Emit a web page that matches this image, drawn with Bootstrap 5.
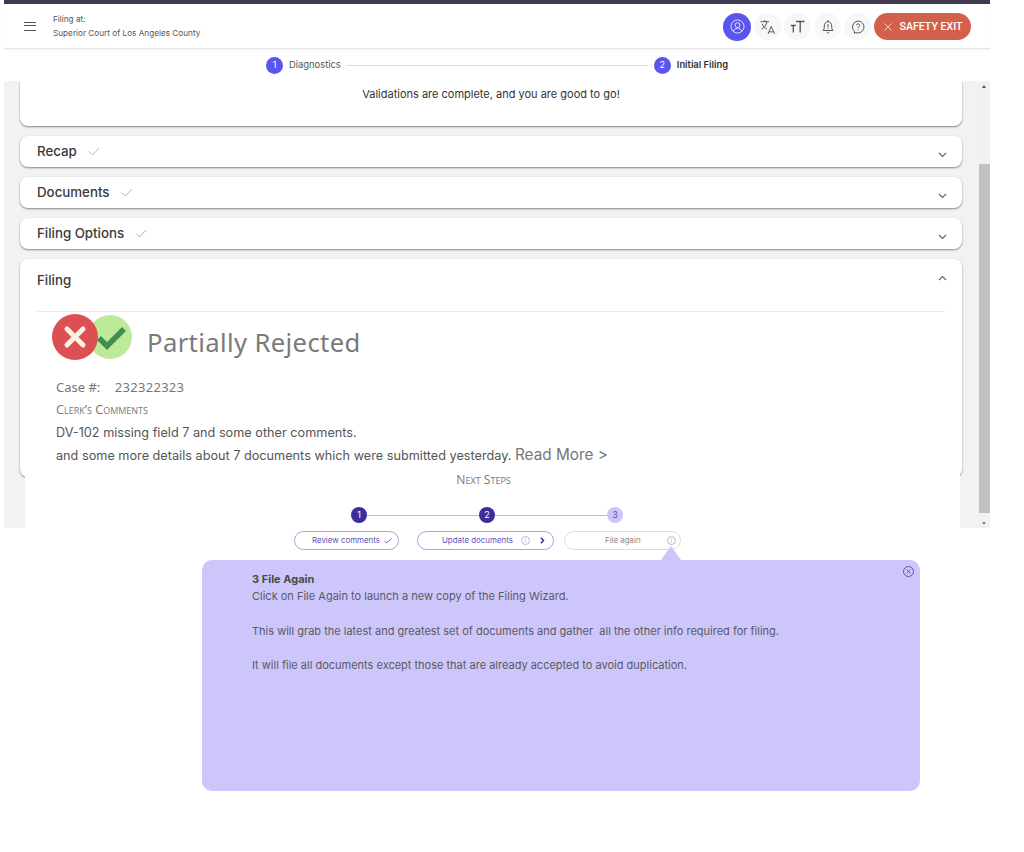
<!DOCTYPE html>
<html lang="en">
<head>
<meta charset="utf-8">
<title>Filing</title>
<link href="https://cdn.jsdelivr.net/npm/bootstrap@5.3.0/dist/css/bootstrap.min.css" rel="stylesheet">
<style>
html,body{height:852px;overflow:hidden;background:#fff;}
body{font-family:Inter,"Liberation Sans",sans-serif;color:#444;position:relative;}
.app-frame{width:990px;padding-left:4px;}
.top-strip{height:4px;background:#3f3a4f;margin-bottom:1px;}
.app-header{height:44px;border-bottom:1px solid #e6e6e6;box-shadow:0 1px 2px rgba(0,0,0,.05);padding:0 19px 0 20px;}
.burger{width:12px;height:9px;border-top:1.5px solid #555;border-bottom:1.5px solid #555;position:relative;margin-right:17px;}
.burger::after{content:"";position:absolute;left:0;right:0;top:2.25px;border-top:1.5px solid #555;}
.court{font-size:8.2px;line-height:13.5px;color:#555;}
.round-btn{width:27px;height:27px;border-radius:50%;background:#f6f7f8;border:0;padding:0;margin-left:3px;color:#555;}
.round-btn.active-user{width:28px;height:28px;background:#5a55ee;color:#e8e6ff;margin-left:0;}
.exit-btn{height:27px;width:97px;margin-left:3px;background:#d2604b;color:#fff;border:0;border-radius:14px;font:500 10.6px Roboto,sans-serif;padding:0 0 0 1px;}
.wizard{height:32px;font-size:9.4px;color:#555;}
.wiz-num{width:17px;height:17px;border-radius:50%;background:#5a55ee;color:#fff;font-size:9px;margin-right:6px;}
.wiz-line{width:301px;height:1px;background:#ddd;margin:0 6px;}
.wiz-strong{font-weight:600;color:#333;}
.work{height:447px;background:#f2f2f2;}
.pane{flex:1;padding:0 17px 0 16px;overflow:hidden;}
.scroller{width:11px;background:#f1f1f1;position:relative;}
.scroll-thumb{position:absolute;left:0;right:0;top:83px;height:349px;background:#c1c1c1;}
.arrow-up,.arrow-down{position:absolute;left:3px;width:0;height:0;border-left:2.5px solid transparent;border-right:2.5px solid transparent;}
.arrow-up{top:4px;border-bottom:3px solid #555;}
.arrow-down{bottom:3px;border-top:3px solid #888;}
.panel-card{background:#fff;border:0;border-radius:8px;box-shadow:0 1px 2px rgba(0,0,0,.45);margin-bottom:10px;}
.panel-first{height:45px;border-radius:0 0 8px 8px;font-size:11px;color:#333;text-align:center;padding-top:5px;}
.panel-row{height:31px;padding:0 15px 0 17px;font-size:13.3px;font-weight:500;color:#3a3a3a;}
.panel-row .tick{margin-left:11px;}
.panel-row .chev{margin-top:6px;}
.panel-open{height:218px;padding:0 17px;}
.open-head{height:42px;padding-top:1px;font-size:13.3px;font-weight:500;color:#3a3a3a;}
.open-chev{margin-right:-2px;margin-top:-5px;}
.open-body{border-top:1px solid #ececec;margin-top:10px;padding-left:19px;position:relative;}
.status-line{height:62px;}
.status-icon{margin-left:-4px;margin-top:-12px;}
.status-title{font-size:25.7px;color:#7a7a7a;margin-left:14px;line-height:1;font-family:"Noto Sans",sans-serif;letter-spacing:.35px;margin-top:-1px;}
.case-line{font:13px "Noto Sans",sans-serif;color:#777;line-height:18px;margin:4px 0 7px;}
.case-line span{margin-left:11px;letter-spacing:.3px;}
.clerk{font:12.7px/13px "Open Sans",sans-serif;font-variant:small-caps;color:#777;margin-bottom:6px;}
.detail{font-size:12.7px;line-height:21.5px;color:#555;}
.read-more{font-size:15.3px;color:#777;}
.next-panel{position:absolute;left:25px;top:473px;width:935px;height:79px;background:#fff;text-align:center;}
.next-title{font:12.2px/13px "Open Sans",sans-serif;font-variant:small-caps;color:#777;margin-bottom:21px;width:917px;}
.step-track{width:272px;margin-left:326px;height:16px;}
.step-dot{width:16px;height:16px;border-radius:50%;background:#3d2f9b;color:#fff;font-size:9px;flex:none;}
.step-dot.pending{background:#cbc5fa;color:#5a4fc0;}
.step-bar{flex:1;height:1px;background:#bcbcc8;}
.pill-row{margin-left:269px;margin-top:8px;}
.step-pill{height:19px;border:1px solid #a9a3dd;border-radius:10px;font-size:7.9px;color:#5d54b8;background:#fff;padding:0;position:relative;}
.step-pill.muted{border-color:#ddd;color:#888;}
.pill-one{width:105px;padding-left:17px;margin-right:18px;}
.pill-two{width:137px;padding-left:24px;margin-right:10px;}
.pill-three{width:117px;padding-left:40px;}
.info-dot{width:9px;height:9px;border-radius:50%;border:1px solid #b9b4ea;color:#a8a2e6;font-size:6px;line-height:7px;text-align:center;flex:none;}
.coach{position:absolute;left:202px;top:560px;width:718px;height:231px;background:#ccc6fa;border-radius:10px;padding:11px 50px;font-size:11px;line-height:17.2px;color:#5a5a66;}
.coach p{margin:0 0 17.2px;}
.coach strong{font-weight:700;color:#4a4a4a;}
.coach-tip{position:absolute;left:459px;top:-14px;width:0;height:0;border-left:10px solid transparent;border-right:10px solid transparent;border-bottom:14px solid #ccc6fa;}
.coach-close{position:absolute;right:6px;top:6px;width:11px;height:11px;color:#4f46a8;}
</style>
</head>
<body>
<div class="app-frame">
  <div class="top-strip"></div>
  <header class="app-header d-flex align-items-center bg-white">
    <div class="burger"></div>
    <div class="court">Filing at:<br>Superior Court of Los Angeles County</div>
    <div class="ms-auto d-flex align-items-center">
      <button class="round-btn active-user d-flex align-items-center justify-content-center" aria-label="Profile">
        <svg width="15" height="15" viewBox="0 0 16 16" fill="none" stroke="currentColor" stroke-width="1"><circle cx="8" cy="8" r="7"/><circle cx="8" cy="6.5" r="2.6"/><path d="M3.4 13c1-2.2 2.6-3 4.6-3s3.6.8 4.6 3"/></svg>
      </button>
      <button class="round-btn d-flex align-items-center justify-content-center" aria-label="Language">
        <svg width="18" height="16" viewBox="0 0 16 15" fill="none" stroke="currentColor" stroke-width=".9"><path d="M1 2.5h8M5 1v1.5M2 9.5c3-1.500 4.500-4 5-7M2.500 4.500c1 2.500 2.500 4 4.500 5M8 14l3-7 3.200 7M9 12h4.200"/></svg>
      </button>
      <button class="round-btn d-flex align-items-center justify-content-center" aria-label="Text size">
        <svg width="15" height="13" viewBox="0 0 15 13" fill="none" stroke="currentColor" stroke-width="1.3"><path d="M6 1.500h8.500M10.200 1.500V12.500M.8 5.500h5M3.300 5.500v7"/></svg>
      </button>
      <button class="round-btn d-flex align-items-center justify-content-center" aria-label="Notifications">
        <svg width="12" height="15" viewBox="0 0 12 15" fill="none" stroke="currentColor" stroke-width="1"><path d="M1 11.500c1-1 1.300-2 1.300-4.500 0-2.500 1.500-4.200 3.700-4.200S9.700 4.500 9.700 7c0 2.500.3 3.500 1.300 4.500zM6 1v1.800M4.700 13.200c.6.900 2 .9 2.600 0M6 5v3.500M6 9.500v.8"/></svg>
      </button>
      <button class="round-btn d-flex align-items-center justify-content-center" aria-label="Help">
        <svg width="14" height="14" viewBox="0 0 14 14" fill="none" stroke="currentColor" stroke-width="1"><path d="M7 1a6 6 0 1 1-2.400 11.500L3.500 13.500v-2A6 6 0 0 1 7 1z"/><path d="M5.400 5.400c0-2 3.200-2 3.200-.1 0 1.300-1.600 1.300-1.600 2.800M7 9.400v.8"/></svg>
      </button>
      <button class="exit-btn d-flex align-items-center justify-content-center">
        <svg width="8" height="8" viewBox="0 0 8 8" stroke="#f5d5cf" stroke-width=".9" class="me-2"><path d="M.5.500l7 7M7.500.500l-7 7"/></svg>SAFETY EXIT
      </button>
    </div>
  </header>
  <nav class="wizard d-flex align-items-center justify-content-center">
    <span class="wiz-num d-flex align-items-center justify-content-center">1</span>Diagnostics
    <span class="wiz-line"></span>
    <span class="wiz-num d-flex align-items-center justify-content-center">2</span><span class="wiz-strong">Initial Filing</span>
  </nav>
  <div class="work d-flex">
    <main class="pane">
      <div class="panel-card panel-first">Validations are complete, and you are good to go!</div>
      <div class="panel-card panel-row d-flex align-items-center">Recap
        <svg class="tick" width="12" height="9" viewBox="0 0 12 9" fill="none" stroke="#8fc4bd" stroke-width="1"><path d="M1 4.500l3.500 3.500 6.500-7"/></svg>
        <svg class="chev ms-auto" width="9" height="6" viewBox="0 0 9 6" fill="none" stroke="#666" stroke-width="1.200"><path d="M1 1l3.500 3.500L8 1"/></svg>
      </div>
      <div class="panel-card panel-row d-flex align-items-center">Documents
        <svg class="tick" width="12" height="9" viewBox="0 0 12 9" fill="none" stroke="#8fc4bd" stroke-width="1"><path d="M1 4.500l3.500 3.500 6.500-7"/></svg>
        <svg class="chev ms-auto" width="9" height="6" viewBox="0 0 9 6" fill="none" stroke="#666" stroke-width="1.200"><path d="M1 1l3.500 3.500L8 1"/></svg>
      </div>
      <div class="panel-card panel-row d-flex align-items-center">Filing Options
        <svg class="tick" width="12" height="9" viewBox="0 0 12 9" fill="none" stroke="#8fc4bd" stroke-width="1"><path d="M1 4.500l3.500 3.500 6.500-7"/></svg>
        <svg class="chev ms-auto" width="9" height="6" viewBox="0 0 9 6" fill="none" stroke="#666" stroke-width="1.200"><path d="M1 1l3.500 3.500L8 1"/></svg>
      </div>
      <div class="panel-card panel-open">
        <div class="open-head d-flex align-items-center justify-content-between">Filing
          <svg class="open-chev" width="9" height="6" viewBox="0 0 9 6" fill="none" stroke="#666" stroke-width="1.200"><path d="M1 5l3.500-3.500L8 5"/></svg>
        </div>
        <div class="open-body">
          <div class="status-line d-flex align-items-center">
            <svg class="status-icon" width="81" height="46" viewBox="0 0 81 46">
              <circle cx="58" cy="23" r="22" fill="#bdea98"/>
              <path d="M47 24l8 8 17-17" fill="none" stroke="#3f8f55" stroke-width="5.500"/>
              <circle cx="23" cy="23" r="23" fill="#dc4f52"/>
              <path d="M15 15l16 16M31 15L15 31" fill="none" stroke="#fdf1e6" stroke-width="5" stroke-linecap="round"/>
            </svg>
            <div class="status-title">Partially Rejected</div>
          </div>
          <div class="case-line">Case #: <span>232322323</span></div>
          <div class="clerk">Clerk’s Comments</div>
          <div class="detail">DV-102 missing field 7 and some other comments.<br>and some more details about 7 documents which were submitted yesterday. <span class="read-more">Read More &gt;</span></div>
        </div>
      </div>
    </main>
    <aside class="scroller">
      <span class="arrow-up"></span>
      <div class="scroll-thumb"></div>
      <span class="arrow-down"></span>
    </aside>
  </div>
</div>

<section class="next-panel">
  <div class="next-title">Next Steps</div>
  <div class="step-track d-flex align-items-center">
    <span class="step-dot d-flex align-items-center justify-content-center">1</span>
    <span class="step-bar"></span>
    <span class="step-dot d-flex align-items-center justify-content-center">2</span>
    <span class="step-bar"></span>
    <span class="step-dot pending d-flex align-items-center justify-content-center">3</span>
  </div>
  <div class="pill-row d-flex">
    <button class="step-pill pill-one d-flex align-items-center">Review comments
      <svg class="ms-1" width="8" height="6" viewBox="0 0 8 6" fill="none" stroke="#5d54b8" stroke-width=".9"><path d="M.5 3l2 2L7.500.500"/></svg>
    </button>
    <button class="step-pill pill-two d-flex align-items-center">Update documents
      <span class="info-dot ms-2">i</span>
      <svg class="ms-auto me-2" width="5" height="7" viewBox="0 0 5 7" fill="none" stroke="#3d2f9b" stroke-width="1.500"><path d="M1 .8l2.500 2.700L1 6.200"/></svg>
    </button>
    <button class="step-pill pill-three muted d-flex align-items-center">File again
      <span class="info-dot ms-auto me-1">i</span>
    </button>
  </div>
</section>

<aside class="coach">
  <span class="coach-tip"></span>
  <svg class="coach-close" viewBox="0 0 11 11" fill="none" stroke="currentColor" stroke-width=".9"><circle cx="5.500" cy="5.500" r="5"/><path d="M3.700 3.700l3.600 3.600M7.300 3.700L3.700 7.300"/></svg>
  <strong>3 File Again</strong><br>
  <p>Click on File Again to launch a new copy of the Filing Wizard.</p>
  <p>This will grab the latest and greatest set of documents and gather&nbsp; all the other info required for filing.</p>
  <p>It will file all documents except those that are already accepted to avoid duplication.</p>
</aside>
<script src="https://cdn.jsdelivr.net/npm/bootstrap@5.3.0/dist/js/bootstrap.bundle.min.js"></script>
</body>
</html>
